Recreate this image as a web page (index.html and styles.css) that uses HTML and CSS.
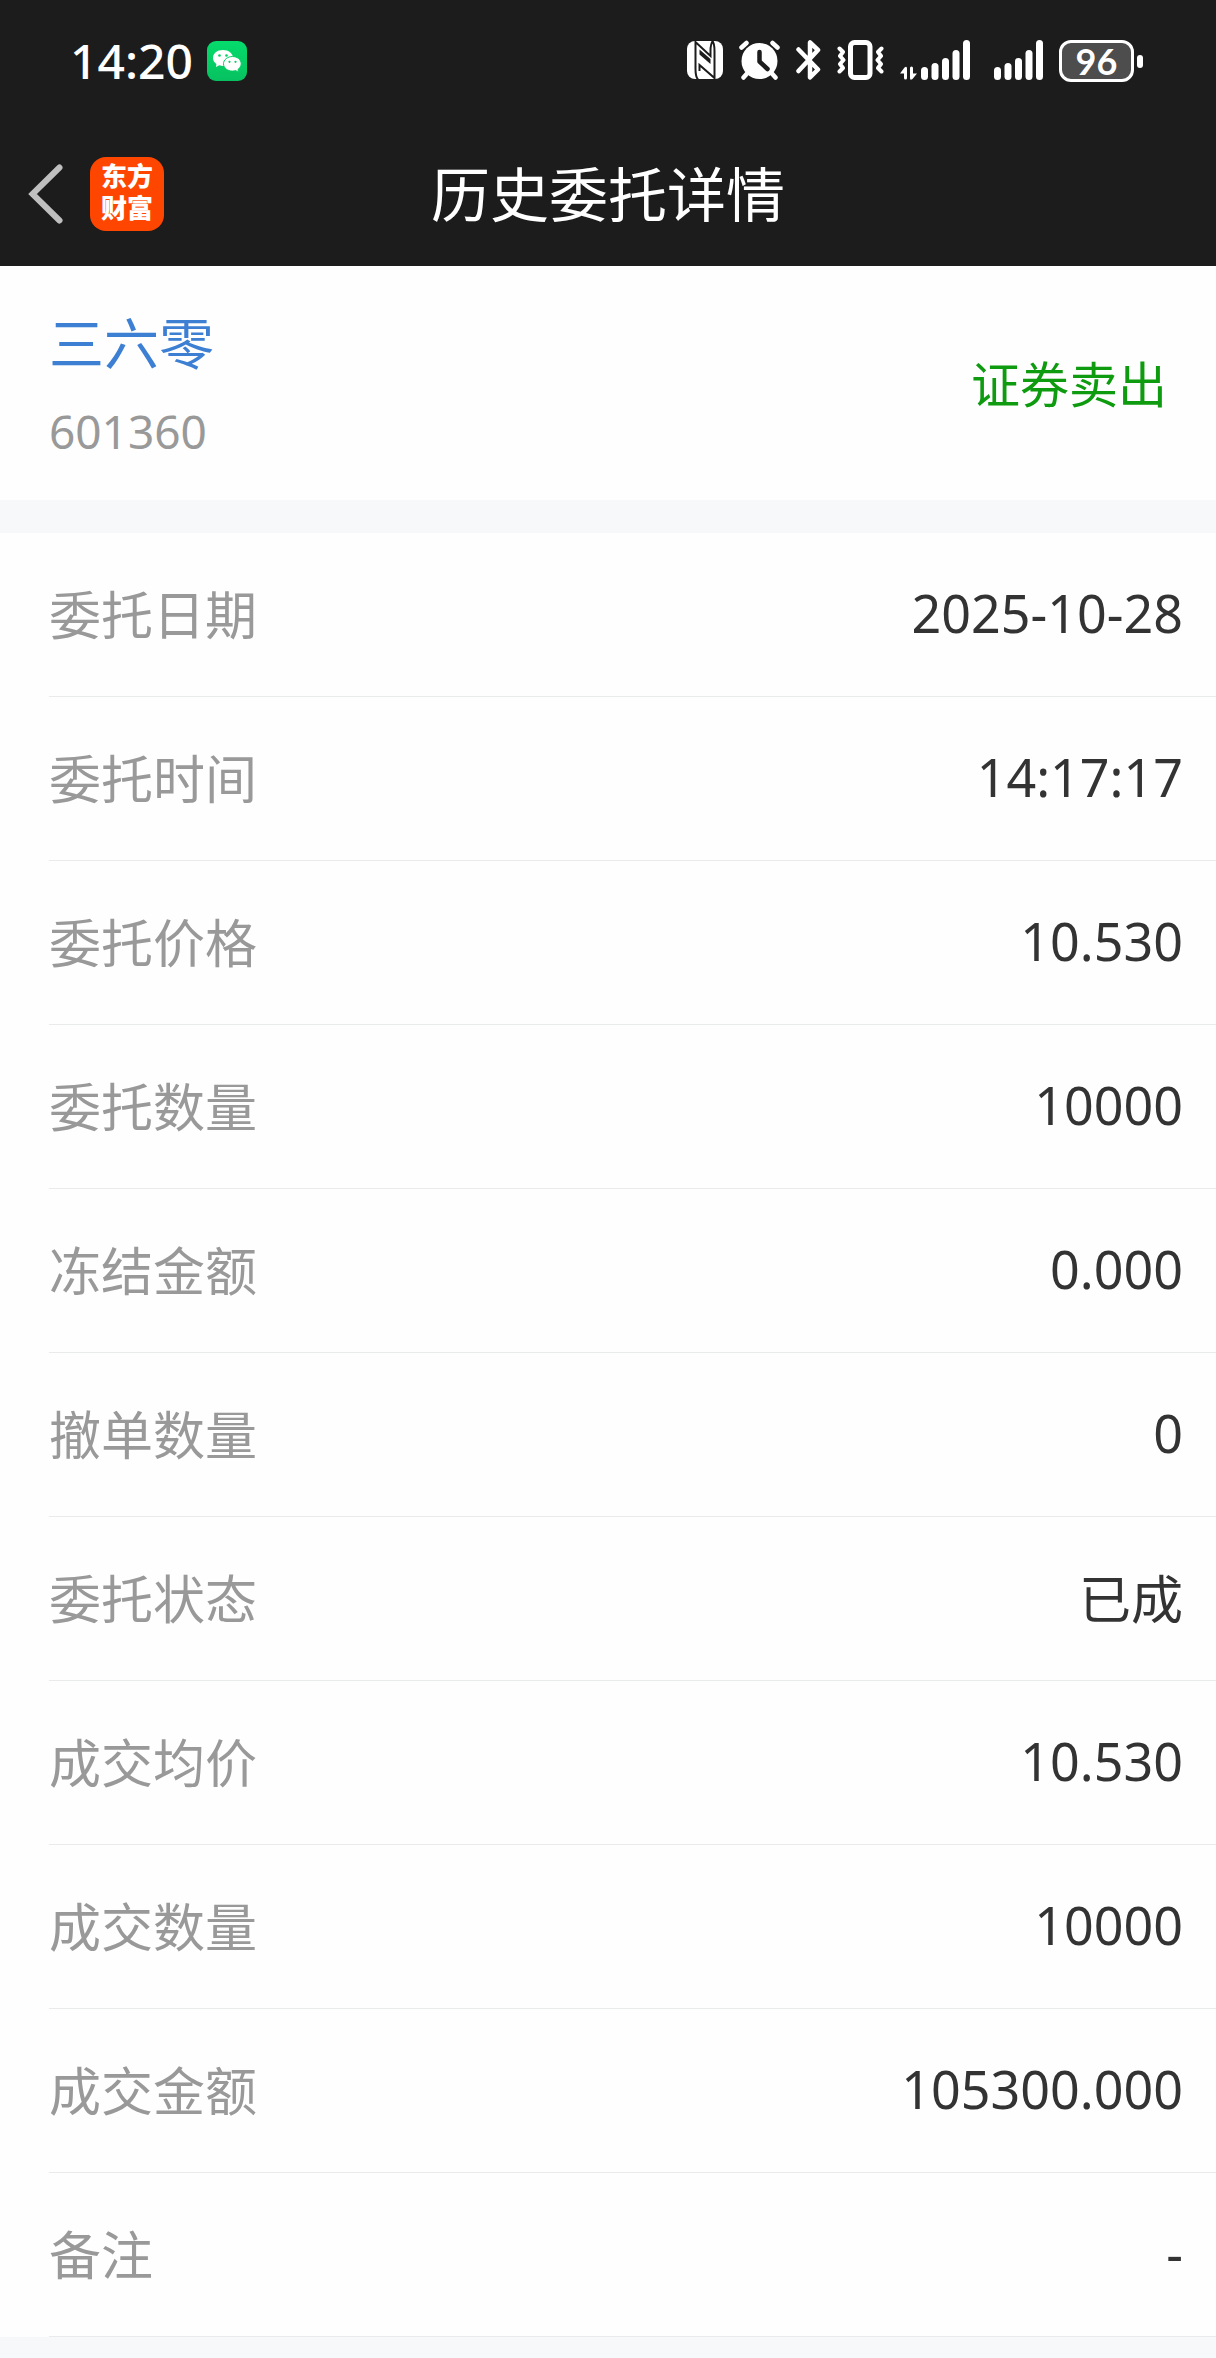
FILE: index.html
```html
<!doctype html>
<html lang="zh-CN">

<head>
    <meta charset="utf-8">
    <meta name="viewport" content="width=device-width">
    <title>历史委托详情</title>
    <link rel="stylesheet" href="styles.css">
</head>

<body>
    <header class="top">
        <div class="status-bar">
            <span class="time">14:20</span>
            <svg class="wechat" width="40" height="40" viewBox="0 0 40 40">
                <defs>
                    <linearGradient id="green" x1="0" y1="0" x2="0" y2="1">
                        <stop offset="0" stop-color="#05dc6c" />
                        <stop offset="1" stop-color="#07c160" />
                    </linearGradient>
                </defs>
                <rect width="40" height="40" rx="9" fill="url(#green)" />
                <path d="M16 9C10 9 6 12.500 6 17c0 2.600 1.400 4.600 3.400 6L9 26l3.400-1.700c1.200.4 2.400.6 3.600.6 5.600 0 10-3.500 10-8S21.600 9 16 9z" fill="#fff" />
                <path d="M25.500 15.500c-5 0-9 3.200-9 7.300s4 7.300 9 7.300c1.200 0 2.200-.2 3.200-.5l2.700 1.600-.4-2.800c2-1.400 3.200-3.400 3.200-5.600 0-4.100-3.900-7.300-8.700-7.300z" fill="#fff" stroke="#06cf66" />
                <g fill="#06cf66">
                    <circle cx="12.500" cy="14.500" r="1.300" />
                    <circle cx="19.500" cy="14.500" r="1.300" />
                    <circle cx="22.500" cy="20.800" r="1.100" />
                    <circle cx="28.500" cy="20.800" r="1.100" />
                </g>
            </svg>

            <div class="status-icons">
                <!-- nfc -->
                <svg width="36" height="44" viewBox="0 0 36 44">
                    <rect y="2" width="36" height="38" rx="8" fill="#fff" />
                    <path d="M11 40.500C8.500 38 8.500 34 8.500 30V3L23.500 17V12C23.500 8 24 4 26 1.500M25 1.500C27.500 4 27.500 8 27.500 12V39L12.500 26V32" fill="none" stroke="#1c1c1c" stroke-width="2" />
                    <path d="M12.500 10.500L23.500 20V25L12.500 15.500z" fill="#1c1c1c" />
                </svg>
                <!-- alarm -->
                <svg class="alarm" width="41" height="44" viewBox="0 0 41 44">
                    <circle cx="20.500" cy="22" r="18" fill="#fff" />
                    <path d="M2.500 8.500l5-4.500M38.500 8.500l-5-4.500M8.500 34l-4 4.500M32.500 34l4 4.500" stroke="#fff" stroke-width="4.500" stroke-linecap="round" />
                    <path d="M20.500 13v9.500l8 7.500" fill="none" stroke="#1c1c1c" stroke-width="4.500" stroke-linecap="round" stroke-linejoin="round" />
                </svg>
                <!-- bluetooth -->
                <svg class="bluetooth" width="25" height="44" viewBox="0 0 25 44">
                    <path d="M2.500 10.500L22 30.500L14 38.500V25M2.500 32L22 11L14 3.500V20" fill="none" stroke="#fff" stroke-width="4.500" stroke-linecap="round" stroke-linejoin="round" />
                </svg>
                <!-- vibrate -->
                <svg class="vibrate" width="47" height="44" viewBox="0 0 47 44">
                    <rect x="13.500" y="3.500" width="19.500" height="35" rx="4" fill="none" stroke="#fff" stroke-width="5" />
                    <path d="M2.500 9.500l3.500 3.500-3 4 3.500 4-3.500 4 3 4-3.500 3.500M44.500 9.500l-3.500 3.500 3 4-3.500 4 3.500 4-3 4 3.500 3.500" fill="none" stroke="#fff" stroke-width="4" stroke-linecap="round" stroke-linejoin="round" />
                </svg>
                <!-- signal, sim 1 with data arrows -->
                <svg class="signal-data" width="70" height="44" viewBox="0 0 70 44">
                    <path d="M0 34.500L4.500 28.500Q7 26.500 7 29.500V39a1.500 1.500 0 0 1-3 0V34.500zM17 34.500L12.500 40Q10 42 10 39V29a1.500 1.500 0 0 1 3 0V34.500z" fill="#fff" />
                    <g fill="#fff">
                        <rect x="21" y="28" width="7" height="13" rx="3.500" />
                        <rect x="31.500" y="24" width="7" height="17" rx="3.500" />
                        <rect x="42" y="19" width="7" height="22" rx="3.500" />
                        <rect x="52.500" y="11" width="7" height="30" rx="3.500" />
                        <rect x="63" y="1" width="7" height="40" rx="3.500" />
                    </g>
                </svg>
                <!-- signal, sim 2 -->
                <svg class="signal" width="49" height="44" viewBox="21 0 49 44">
                    <g fill="#fff">
                        <rect x="21" y="28" width="7" height="13" rx="3.500" />
                        <rect x="31.500" y="24" width="7" height="17" rx="3.500" />
                        <rect x="42" y="19" width="7" height="22" rx="3.500" />
                        <rect x="52.500" y="11" width="7" height="30" rx="3.500" />
                        <rect x="63" y="1" width="7" height="40" rx="3.500" />
                    </g>
                </svg>
                <span class="battery">96</span>
                <span class="battery-tip"></span>
            </div>
        </div>

        <nav class="nav">
            <div class="nav-left">
                <button class="back" type="button" aria-label="返回">
                    <svg width="36" height="62" viewBox="0 0 36 62">
                        <path d="M31.500 4.500L4.500 31L31.500 57.500" fill="none" stroke="#bfbfbf" stroke-width="6" stroke-linecap="round" />
                    </svg>
                </button>
                <a class="logo" href="#">东方<br>财富</a>
            </div>
            <h1 class="title">历史委托详情</h1>
        </nav>
    </header>

    <main>
        <section class="summary">
            <div class="stock">
                <a class="stock-name" href="#">三六零</a>
                <div class="stock-code">601360</div>
            </div>
            <span class="side">证券卖出</span>
        </section>

        <dl class="details">
            <div class="row">
                <dt>委托日期</dt>
                <dd>2025-10-28</dd>
            </div>
            <div class="row">
                <dt>委托时间</dt>
                <dd>14:17:17</dd>
            </div>
            <div class="row">
                <dt>委托价格</dt>
                <dd>10.530</dd>
            </div>
            <div class="row">
                <dt>委托数量</dt>
                <dd>10000</dd>
            </div>
            <div class="row">
                <dt>冻结金额</dt>
                <dd>0.000</dd>
            </div>
            <div class="row">
                <dt>撤单数量</dt>
                <dd>0</dd>
            </div>
            <div class="row">
                <dt>委托状态</dt>
                <dd>已成</dd>
            </div>
            <div class="row">
                <dt>成交均价</dt>
                <dd>10.530</dd>
            </div>
            <div class="row">
                <dt>成交数量</dt>
                <dd>10000</dd>
            </div>
            <div class="row">
                <dt>成交金额</dt>
                <dd>105300.000</dd>
            </div>
            <div class="row">
                <dt>备注</dt>
                <dd>-</dd>
            </div>
        </dl>
    </main>
</body>

</html>
```
FILE: styles.css
```css
* {
    box-sizing: border-box;
}

body {
    margin: 0;
    background: #f7f8fa;
    color: #333;
    font-family: "Noto Sans", "Noto Sans CJK SC", sans-serif;
    font-size: 52px;
}

a {
    text-decoration: none;
}

svg {
    display: block;
    flex: none;
}

.top {
    background: #1c1c1c;
    color: #fff;
}

/* status bar */
.status-bar {
    display: flex;
    align-items: center;
    height: 122px;
    padding: 0 73px 0 70px;
}

.time {
    font-size: 48px;
    font-weight: 500;
    line-height: 60px;
}

.wechat {
    margin-left: 14px;
}

.status-icons {
    display: flex;
    align-items: center;
    margin-left: auto;
}

.alarm,
.bluetooth,
.vibrate,
.signal-data {
    margin-left: 16px;
}

.signal {
    margin-left: 24px;
}

.battery {
    width: 75px;
    height: 42px;
    margin-left: 16px;
    border: 3px solid #fff;
    border-radius: 12px;
    background: #4d4d4d;
    font-family: Lato, sans-serif;
    font-size: 36px;
    font-weight: 700;
    line-height: 36px;
    text-align: center;
}

.battery-tip {
    width: 6px;
    height: 13px;
    margin-left: 3px;
    border-radius: 3px;
    background: #fff;
}

/* nav bar */
.nav {
    display: grid;
    grid-template-columns: 1fr auto 1fr;
    align-items: center;
    height: 144px;
}

.nav-left {
    display: flex;
    align-items: center;
    gap: 26px;
    padding-left: 28px;
}

.back {
    padding: 0;
    border: 0;
    background: none;
    cursor: pointer;
}

.logo {
    width: 74px;
    height: 74px;
    padding-top: 4px;
    border-radius: 16px;
    background: #ff4600;
    color: #fff;
    font-family: "Liberation Sans", "Noto Sans CJK SC", sans-serif;
    font-size: 26px;
    font-weight: 900;
    line-height: 32px;
    text-align: center;
}

.title {
    margin: 0;
    font-size: 59px;
    font-weight: 400;
    line-height: 80px;
}

/* stock */
.summary {
    display: flex;
    justify-content: space-between;
    align-items: center;
    height: 234px;
    padding: 0 49px 4px;
    background: #fefefe;
}

.stock {
    padding-top: 12px;
}

.stock-name {
    display: block;
    color: #3d7fd3;
    font-size: 55px;
    line-height: 88px;
}

.stock-code {
    color: #999;
    font-size: 46px;
    line-height: 88px;
}

.side {
    color: #0f9b0f;
    font-size: 49px;
}

/* order details */
.details {
    margin: 33px 0 21px;
    padding-left: 49px;
    background: #fefefe;
}

.row {
    display: flex;
    justify-content: space-between;
    align-items: center;
    height: 164px;
    padding: 0 33px 4px 0;
    border-bottom: 1px solid #e9ebeb;
}

.row dt {
    color: #999;
}

.row dd {
    margin: 0;
}
```
